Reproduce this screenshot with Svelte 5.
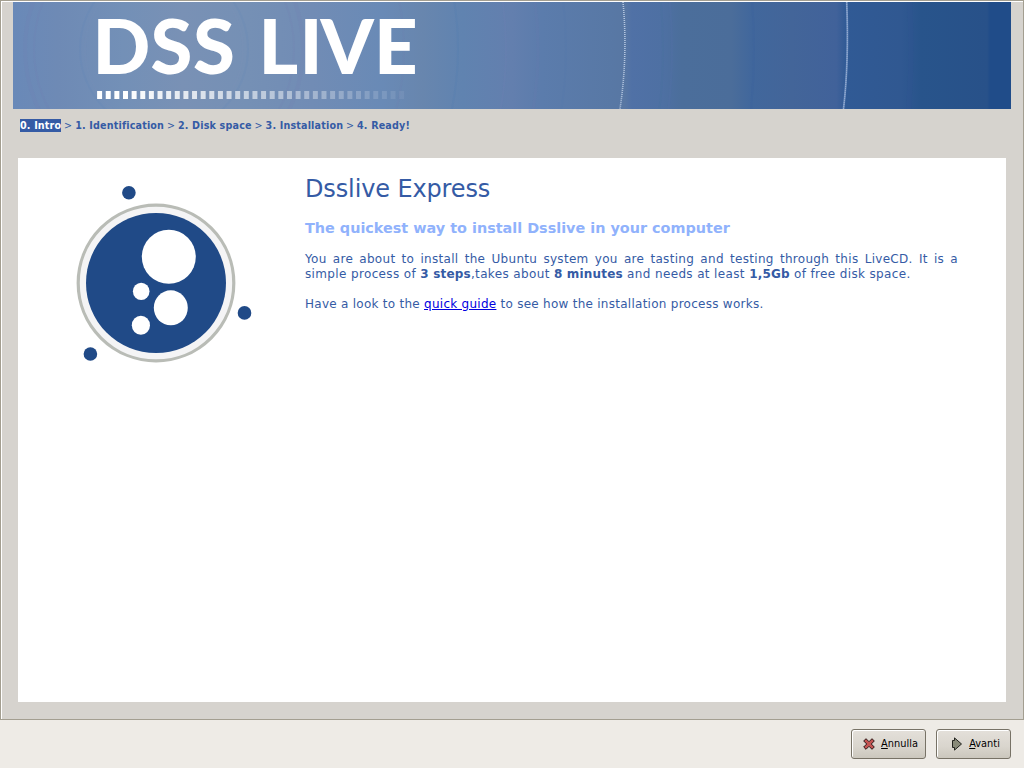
<script>
  const steps = ['0. Intro', '1. Identification', '2. Disk space', '3. Installation', '4. Ready!'];
  const dashes = Array.from({ length: 36 }, (_, i) => ({
    x: 84.1 + i * 8.63,
    o: i < 3 ? 1 : Math.max(0.05, 1 - (i - 3) * 0.0292)
  }));
</script>

<div class="window">
  <section class="frame">
    <header>
      <svg width="998" height="107" viewBox="0 0 998 107">
        <defs>
          <clipPath id="banner"><rect width="998" height="107" /></clipPath>
          <linearGradient id="sky">
            <stop offset="0" stop-color="#6989b8" />
            <stop offset="0.045" stop-color="#6e8ab5" />
            <stop offset="0.11" stop-color="#7390b7" />
            <stop offset="0.17" stop-color="#7991b5" />
            <stop offset="0.235" stop-color="#7590b5" />
            <stop offset="0.3" stop-color="#718cb5" />
            <stop offset="0.37" stop-color="#698ab6" />
            <stop offset="0.41" stop-color="#6886ae" />
            <stop offset="0.45" stop-color="#6083b0" />
            <stop offset="0.5" stop-color="#637fae" />
            <stop offset="0.53" stop-color="#5b7cac" />
            <stop offset="0.6" stop-color="#5878a5" />
            <stop offset="0.613" stop-color="#5877a3" />
            <stop offset="0.62" stop-color="#5071a6" />
            <stop offset="0.65" stop-color="#4e70a3" />
            <stop offset="0.67" stop-color="#4b6e9b" />
            <stop offset="0.72" stop-color="#4b6d9a" />
            <stop offset="0.74" stop-color="#41679c" />
            <stop offset="0.78" stop-color="#436599" />
            <stop offset="0.825" stop-color="#41629a" />
            <stop offset="0.835" stop-color="#305a95" />
            <stop offset="0.89" stop-color="#305891" />
            <stop offset="0.91" stop-color="#28548b" />
            <stop offset="0.976" stop-color="#285189" />
            <stop offset="0.979" stop-color="#204c89" />
            <stop offset="1" stop-color="#204c89" />
          </linearGradient>
        </defs>
        <rect width="998" height="107" fill="url(#sky)" />
        <g clip-path="url(#banner)" fill="none" stroke-opacity="0.1" stroke-width="2">
          <circle cx="151" cy="47" r="84" stroke="#4c7db8" />
          <circle cx="151" cy="47" r="79" stroke="#8094b9" />
          <circle cx="151" cy="47" r="139" stroke="#7a77b3" stroke-width="4" />
          <circle cx="151" cy="47" r="130" stroke="#7a77b3" />
          <circle cx="151" cy="47" r="240" stroke="#7a77b3" />
          <circle cx="151" cy="47" r="294" stroke="#3e79b0" />
          <circle cx="151" cy="47" r="342" stroke="#7e83bb" />
          <circle cx="151" cy="47" r="374" stroke="#7678b3" stroke-width="3" />
          <circle cx="151" cy="47" r="402" stroke="#5078b5" />
          <circle cx="151" cy="47" r="499" stroke="#397296" />
          <circle cx="151" cy="47" r="508" stroke="#6475b8" />
          <circle cx="151" cy="47" r="590" stroke="#3454a0" />
          <circle cx="151" cy="47" r="747" stroke="#364a9a" stroke-width="5" />
        </g>
        <path d="M610 0Q615 53 607 107" fill="none" stroke="#b4c6e0" stroke-width="1.6" stroke-dasharray="1 1" />
        <path d="M833.7 0Q836 60 830.5 107" fill="none" stroke="#6f8fc0" stroke-width="1.8" />
        <path d="M833.7 0Q836 60 830.5 107" fill="none" stroke="#a6b9d7" stroke-width="1" stroke-dasharray="1 1" />
        <text x="79.5 137.5 180 220 245.5 286.5 307.5 361" y="72" class="brand">DSS LIVE</text>
        {#each dashes as d}
          <rect x={d.x} y="89" width="5" height="8" fill="#fff" opacity={d.o} />
        {/each}
      </svg>
    </header>

    <nav>
      {#each steps as step, i}{#if i > 0}<span class="sep">&gt;</span>{/if}<span class="step" class:current={i === 0}>{step}</span>{/each}
    </nav>

    <main>
      <div class="art">
        <svg width="210" height="210" viewBox="60 170 210 210">
          <circle cx="156" cy="283" r="77.8" fill="#f4f4f5" stroke="#b9bcb6" stroke-width="3.2" />
          <circle cx="156" cy="283" r="70" fill="#204a87" />
          <g fill="#fff">
            <circle cx="168.8" cy="256.8" r="27" />
            <ellipse cx="141.2" cy="291.3" rx="8.3" ry="8.6" />
            <ellipse cx="170.8" cy="307.8" rx="17" ry="17.5" />
            <ellipse cx="140.9" cy="325.3" rx="9.1" ry="9.5" />
          </g>
          <g fill="#204a87">
            <circle cx="128.9" cy="192.7" r="6.8" />
            <circle cx="244.5" cy="312.9" r="6.8" />
            <circle cx="90.4" cy="354" r="6.8" />
          </g>
        </svg>
      </div>
      <article>
        <h1>Dsslive Express</h1>
        <h2>The quickest way to install Dsslive in your computer</h2>
        <p class="intro"><span class="full">You are about to install the Ubuntu system you are tasting and testing through this LiveCD. It is a</span><span class="rest">simple process of <b>3 steps</b>,takes about <b>8 minutes</b> and needs at least <b>1,5Gb</b> of free disk space.</span></p>
        <p>Have a look to the <a href="#guide">quick guide</a> to see how the installation process works.</p>
      </article>
    </main>
  </section>

  <footer>
    <button>
      <svg width="12" height="12" viewBox="0 0 12 12"><path d="M3 .7 6 3.7 9 .7 11.3 3 8.3 6 11.3 9 9 11.3 6 8.3 3 11.3.7 9 3.7 6 .7 3Z" fill="#c35452" stroke="#2b1515" /></svg>
      <span><u>A</u>nnulla</span>
    </button>
    <button>
      <svg width="12" height="14" viewBox="0 0 12 14"><path d="M1.5 3.5H3.5V.9L10.5 7 3.5 13.1V10.5H1.5Z" fill="#888a78" stroke="#22231e" /></svg>
      <span><u>A</u>vanti</span>
    </button>
  </footer>
</div>

<style>
  :global(body) { margin: 0; background: #efebe7; }
  .window { width: 1024px; height: 768px; display: flex; flex-direction: column; overflow: hidden; font-family: "DejaVu Sans", sans-serif; background: #eeebe6; }
  .frame { box-sizing: border-box; height: 720px; border: 1px solid #a39e90; box-shadow: inset 1px 1px #fff; background: #d6d3ce; padding: 1px 12px 0; display: flex; flex-direction: column; }
  header { height: 107px; flex: none; }
  svg { display: block; flex: none; overflow: visible; }
  .brand { font: 900 76px Lato, sans-serif; fill: #fff; }
  nav { height: 49px; flex: none; box-sizing: border-box; padding: 10px 0 0 7px; display: flex; align-items: flex-start; font-size: 9.6px; letter-spacing: 0.16px; line-height: 13px; font-weight: bold; color: #355ba5; white-space: pre; }
  .sep { font-weight: normal; width: 13.9px; text-align: center; }
  .current { background: #355ba5; color: #fff; }
  main { margin: 0 5px; height: 544px; background: #fff; display: flex; color: #355ba5; }
  .art { width: 245px; padding: 12px 0 0 42px; }
  article { width: 653px; padding-top: 16px; font-size: 12px; line-height: 15px; }
  h1 { margin: 0; font-size: 24px; line-height: 30px; font-weight: normal; letter-spacing: -0.13px; }
  h2 { margin: 15px 0; font-size: 14.4px; line-height: 18px; color: #90b2fc; white-space: nowrap; }
  p { margin: 0 0 15px; letter-spacing: 0.265px; }
  .full { display: block; text-align: justify; text-align-last: justify; letter-spacing: 0.3px; }
  .rest { display: block; letter-spacing: 0.36px; }
  .rest b { letter-spacing: 0.2px; }
  a { color: #0000e0; }
  footer { height: 48px; box-sizing: border-box; padding: 9px 13px 0 0; display: flex; justify-content: flex-end; gap: 10px; }
  button { box-sizing: border-box; width: 75px; height: 30px; padding: 0 0 0 4px; border: 1px solid #777266; border-radius: 3px; background: linear-gradient(#e4e0da, #d9d5cd 60%, #cbc7bd); box-shadow: inset 1px 1px #fff; display: flex; align-items: center; justify-content: center; gap: 6px; font: 9.8px "DejaVu Sans", sans-serif; color: #000; }
  button span { margin-top: -1px; }
</style>
